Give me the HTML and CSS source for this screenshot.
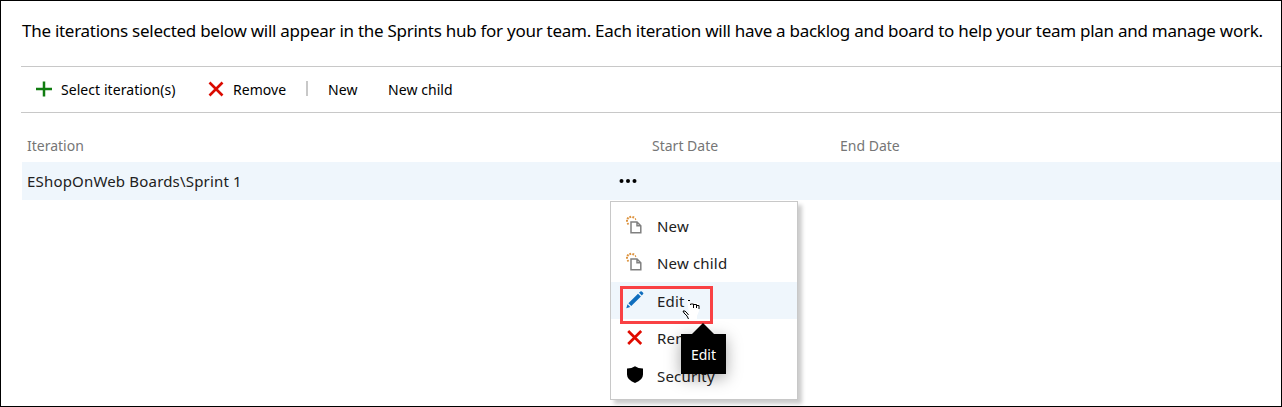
FILE: index.html
```
<!DOCTYPE html>
<html lang="en">
<head>
<meta charset="utf-8">
<title>Iterations</title>
<link rel="stylesheet" href="styles.css">
</head>
<body>
<main class="panel">
  <p class="intro"><span>The iterations selected below will appear in the Sprints hub for your team. Each iteration will have a backlog and board to help your team plan and manage work.</span></p>
  <div class="toolbar">
    <button class="tool tool-select">
      <svg class="tool-icon" width="16" height="16" viewBox="0 0 16 16"><path d="M8 .5v15M0 8h16" stroke="#107c10" stroke-width="2.5"/></svg>
      <span>Select iteration(s)</span>
    </button>
    <button class="tool tool-remove">
      <svg class="tool-icon" width="16" height="16" viewBox="0 0 16 16"><path d="M1.500 1.500l13 13M14.500 1.500l-13 13" stroke="#da0a00" stroke-width="2.600"/></svg>
      <span>Remove</span>
    </button>
    <i class="divider"></i>
    <button class="tool tool-new"><span>New</span></button>
    <button class="tool"><span>New child</span></button>
  </div>
  <div class="grid">
    <div class="row head"><span>Iteration</span><span></span><span>Start Date</span><span>End Date</span></div>
    <div class="row item">
      <span class="name">EShopOnWeb Boards\Sprint 1</span>
      <svg class="dots" width="18" height="6" viewBox="0 0 18 6"><circle cx="2.500" cy="3" r="2"/><circle cx="9" cy="3" r="2"/><circle cx="15.500" cy="3" r="2"/></svg>
    </div>
  </div>
  <div class="menu">
    <div class="option"><svg width="18" height="20" viewBox="0 0 18 20"><use href="#new-doc"/></svg><span>New</span></div>
    <div class="option"><svg width="18" height="20" viewBox="0 0 18 20"><use href="#new-doc"/></svg><span>New child</span></div>
    <div class="option active"><svg width="18" height="20" viewBox="0 0 18 20"><path d="M.3 18.300l1.200-4 2.800 2.800zM2.400 13.200L12 3.700l2.900 2.900-9.600 9.500zM13 2.700l1.400-1.300q.7-.5 1.400 0l1.300 1.300q.7.700 0 1.400L15.800 5.500z" fill="#106ebe"/></svg><span>Edit</span></div>
    <div class="option"><svg width="18" height="20" viewBox="0 0 18 20"><path d="M2.200 4l13 13M15.200 4l-13 13" stroke="#e00b00" stroke-width="2.700"/></svg><span>Remove</span></div>
    <div class="option"><svg width="18" height="20" viewBox="0 0 18 20"><path d="M9 1.200Q12.500 3.700 17 3.600V9.500q0 5.500-8 8.500Q1 15 1 9.500V3.600Q5.500 3.700 9 1.200z" fill="#000"/></svg><span>Security</span></div>
  </div>
  <div class="highlight"></div>
  <svg class="pointer" width="20" height="26" viewBox="0 0 20 26">
    <path d="M6 3h2v3h9l1 2v6l-2 5v4H8v-3l-4-4.500V14l4 2z" fill="#fff"/>
    <path d="M7 3.500h2M9.500 8V7h3v4M12.500 7.500h3V11M15.500 8.500h2.500V12M2 14h2l2 2 1.500 2M2 14l1 2 3 3 1.500 3" fill="none" stroke="#000" stroke-width="1"/>
  </svg>
  <div class="tooltip"><span>Edit</span></div>
</main>
<svg class="defs" width="0" height="0">
  <symbol id="new-doc" viewBox="0 0 18 20">
    <path d="M5 7h6l3.800 3.800v7H5zM11 7v3.800h3.800" fill="#fff" stroke="#808080" stroke-width="1.500"/>
    <g fill="none" stroke="#dd9440" stroke-width="1.900"><path d="M4 1l.5 2M7.600 1.300L6.900 3.300M1 2.700l1.700 1.200M0 5.800l2 .1M1.200 9.200l1.500-1M9 4.300l1-.4"/></g>
  </symbol>
</svg>
</body>
</html>
```
FILE: styles.css
```
* { box-sizing: border-box; }
body { margin: 0; background: #fff; font-family: "Noto Sans", "Open Sans", sans-serif; color: #000; }
.panel { position: relative; width: 1282px; height: 407px; padding: 0 0 0 20px; border: 1px solid #000; overflow: hidden; }
.intro { margin: 0; height: 65px; padding: 17px 0 0 1px; font-size: 17px; line-height: 26px; letter-spacing: -.27px; white-space: nowrap; }
.toolbar { display: flex; align-items: center; height: 47px; padding-left: 15px; border-top: 1px solid #c8c8c8; border-bottom: 1px solid #c8c8c8; }
.tool { display: flex; align-items: center; padding: 0; border: 0; background: none; color: #000; font: 14px/20px "Noto Sans", "Open Sans", sans-serif; letter-spacing: .06px; white-space: nowrap; }
.tool-icon { margin: -2px 9px 0 0; }
.tool-select { width: 172px; }
.tool-remove { width: 98px; }
.divider { width: 2px; height: 15px; margin: -3px 20px 0 0; background: #c8c8c8; }
.tool-new { width: 60px; }
.grid { margin-left: 1px; }
.row { display: grid; grid-template-columns: 591px 34px 188px 1fr; align-items: center; padding-left: 5px; font-size: 14px; line-height: 20px; white-space: nowrap; }
.head { height: 49px; padding-top: 17px; color: #767676; }
.item { height: 38px; background: #eff6fc; color: #212121; }
.name { padding-bottom: 1px; font-size: 15px; letter-spacing: .18px; }
.dots { margin-left: 1px; fill: #000; }
.menu { position: absolute; left: 609px; top: 200px; width: 188px; height: 199px; padding-top: 5.3px; border: 1px solid #c8c8c8; background: #fff; box-shadow: 4px 4px 4px rgba(0,0,0,.2); }
.option { display: flex; align-items: center; height: 37.4px; padding-left: 15px; color: #212121; font-size: 15px; line-height: 22px; letter-spacing: .18px; white-space: nowrap; }
.option svg { margin: -2px 13px 0 0; }
.active { background: #eff6fc; }
.highlight { position: absolute; left: 619px; top: 285px; width: 93px; height: 38px; border: 3px solid #f94144; }
.pointer { position: absolute; left: 680px; top: 296px; }
.tooltip { position: absolute; left: 680px; top: 333px; width: 45px; height: 40px; background: #000; color: #fff; font-size: 14px; line-height: 41px; text-align: center; box-shadow: 0 4px 16px rgba(0,0,0,.35); }
.tooltip::before { content: ""; position: absolute; left: 10px; top: -11px; border: 12px solid transparent; border-top: 0; border-bottom: 12px solid #000; }
.defs { position: absolute; }
```
